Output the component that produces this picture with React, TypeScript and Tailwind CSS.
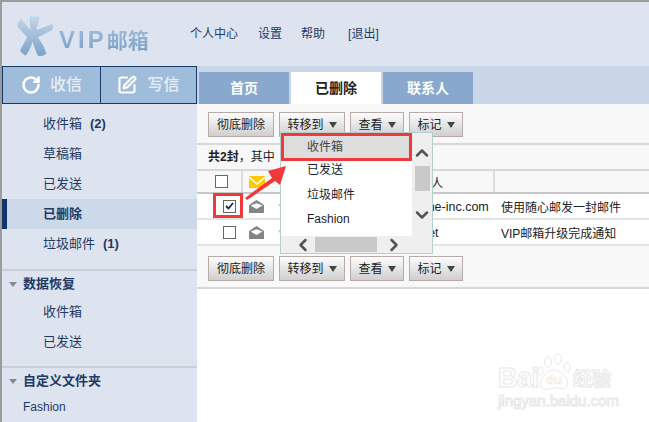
import React from "react";
import { RotateCw, SquarePen, ChevronUp, ChevronDown, ChevronLeft, ChevronRight } from "lucide-react";

const FONT = "font-['Liberation_Sans','Noto_Sans_CJK_SC',sans-serif]";

function Logo() {
  return (
    <svg width="37" height="42" viewBox="20 15 110 127" className="shrink-0">
      <defs>
        <linearGradient id="logoFill" x1="0" y1="0" x2="0" y2="1">
          <stop offset="0" stopColor="#c6d7e9" />
          <stop offset="1" stopColor="#7ba2c9" />
        </linearGradient>
      </defs>
      <path
        fill="url(#logoFill)"
        d="M58 18 L88 20 L78 60 L125 42 Q130 50 126 60 L82 82 Q100 105 108 132 Q95 142 82 138 Q72 115 66 95 Q60 120 45 138 Q33 132 28 122 Q40 100 50 82 Q32 65 20 50 Q20 35 32 27 Q48 45 60 62 Q56 40 58 18 Z"
      />
    </svg>
  );
}

function ToolButton({ label, caret = true, width }: { label: string; caret?: boolean; width: string }) {
  return (
    <div className={`${width} h-[25px] flex items-center justify-center gap-[5px] border border-[#b9aaaa] bg-gradient-to-b from-[#fdfdfd] to-[#cfcfcf] text-[12px] text-[#222]`}>
      <span>{label}</span>
      {caret && <span className="w-0 h-0 border-l-[4px] border-r-[4px] border-t-[6px] border-l-transparent border-r-transparent border-t-[#444]" />}
    </div>
  );
}

function Toolbar() {
  return (
    <div className="flex gap-[5px] pl-[11px]">
      <ToolButton label="彻底删除" caret={false} width="w-[66px]" />
      <ToolButton label="转移到" width="w-[66px]" />
      <ToolButton label="查看" width="w-[54px]" />
      <ToolButton label="标记" width="w-[54px]" />
    </div>
  );
}

function OpenMail() {
  return (
    <svg width="15" height="13" viewBox="0 0 15 13">
      <path d="M0 5 L7.5 0 L15 5 V13 H0 Z" fill="#858585" />
      <path d="M1.5 5.5 L7.5 9 L13.5 5.5 L7.5 3.2 Z" fill="#fff" />
    </svg>
  );
}

function SideItem({ label, count, active }: { label: string; count?: string; active?: boolean }) {
  return (
    <div className={`h-[30px] flex items-center pl-[41px] text-[13px] text-[#1f3a66] ${active ? "bg-[#ccd9e9] border-l-[5px] border-[#12366b] !pl-[36px] font-bold" : ""}`}>
      <span>{label}</span>
      {count && <span className="ml-[8px] font-bold">{count}</span>}
    </div>
  );
}

function SideTitle({ label }: { label: string }) {
  return (
    <div className="h-[26px] flex items-center pl-[7px] gap-[6px] text-[13px] font-bold text-[#1f3a66]">
      <span className="w-0 h-0 border-l-[4px] border-r-[4px] border-t-[5px] border-l-transparent border-r-transparent border-t-[#888]" />
      <span>{label}</span>
    </div>
  );
}

function MailRow({ checked, sender, subject }: { checked?: boolean; sender: string; subject: string }) {
  return (
    <div className="h-[26px] flex items-center border-b-2 border-[#e4e4e4] bg-white text-[12px] text-[#222]">
      <div className="w-[46px] flex justify-end pr-[7px]">
        <div className="w-[13px] h-[13px] border border-[#666] bg-white flex items-center justify-center">
          {checked && (
            <svg width="9" height="8" viewBox="0 0 9 8">
              <path d="M1 4 L3.5 6.5 L8 1" fill="none" stroke="#0f2a55" strokeWidth="1.8" />
            </svg>
          )}
        </div>
      </div>
      <div className="w-[165px] pl-[6px] flex items-center gap-[14px]">
        <OpenMail />
        <span className="w-0 h-0 border-l-[3px] border-r-[3px] border-t-[5px] border-l-transparent border-r-transparent border-t-[#ccc]" />
      </div>
      <div className="w-[93px] pt-[3px] text-[12.5px]">{sender}</div>
      <div className="pt-[3px]">{subject}</div>
    </div>
  );
}

function MoveMenu() {
  return (
    <div className="absolute left-[278px] top-[130px] w-[153px] h-[122px] border border-[#b5cfcf] bg-[#efefef] flex flex-col text-[12px] text-[#1c1c2e]">
      <div className="flex flex-1 min-h-0">
        <div className="w-[135px] bg-white">
          <div className="h-[28px] bg-[#ddd] border-[3px] border-[#f03a3a] flex items-center pl-[23px] text-[#444] relative z-10">收件箱</div>
          <div className="-mt-[3px]">
            {["已发送", "垃圾邮件", "Fashion"].map((f) => (
              <div key={f} className="h-[24.5px] flex items-center pl-[26px]">{f}</div>
            ))}
          </div>
        </div>
        <div className="flex-1 flex flex-col items-center pt-[10px] text-[#555]">
          <ChevronUp size={20} strokeWidth={3} />
          <div className="w-[15px] h-[25px] bg-[#c9c9c9] mt-[3px] shrink-0" />
          <ChevronDown size={20} strokeWidth={3} className="mt-[14px]" />
        </div>
      </div>
      <div className="h-[17px] flex items-center text-[#555]">
        <ChevronLeft size={20} strokeWidth={3} className="ml-[12px]" />
        <div className="w-[62px] h-[15px] bg-[#c9c9c9] ml-[2px]" />
        <ChevronRight size={20} strokeWidth={3} className="ml-[7px]" />
      </div>
    </div>
  );
}

function Watermark() {
  const outline = "text-transparent [-webkit-text-stroke:1px_#e8e8e8]";
  return (
    <div className={`absolute left-[496px] top-[351px] w-[120px] ${outline}`}>
      <div className="flex items-end h-[38px]">
        <span className="text-[27px] leading-[26px] font-bold w-[39px] shrink-0 tracking-[-0.5px]">Bai</span>
        <svg width="36" height="38" viewBox="0 0 34 38" className="shrink-0">
          <g fill="none" stroke="#e8e8e8">
            <ellipse cx="10" cy="9" rx="3.5" ry="5" />
            <ellipse cx="20" cy="6" rx="3.5" ry="5" />
            <ellipse cx="2.5" cy="18" rx="2.5" ry="4" />
            <ellipse cx="29" cy="14" rx="3" ry="4.5" />
            <path d="M16 17 C24 17 32 27 29 33 C26 38 20 34 16 35 C11 36 5 38 3 33 C1 27 9 17 16 17 Z" />
          </g>
          <text x="8" y="31" fontSize="13" fontWeight="700" fill="none" stroke="#e8e8e8" strokeWidth="0.7">du</text>
        </svg>
        <span className="text-[19px] leading-[23px] font-bold whitespace-nowrap">经验</span>
      </div>
      <div className="text-[15px] leading-[16px] mt-[2px] whitespace-nowrap">jingyan.baidu.com</div>
    </div>
  );
}

export default function App() {
  return (
    <div className={`${FONT} relative w-[649px] h-[422px] overflow-hidden bg-[#dde4ef] border-t-2 border-l-2 border-[#9c9c9c]`}>
      {/* top bar */}
      <div className="h-[64px] flex items-center text-[12px] text-[#1f3a66]">
        <div className="w-[188px] flex items-center pl-[15px] pt-[4px] gap-[5px]">
          <Logo />
          <span className="font-bold whitespace-nowrap bg-gradient-to-b from-[#b9cee3] to-[#7098c0] bg-clip-text text-transparent pt-[8px]">
            <span className="text-[24px] tracking-[3px]">VIP</span>
            <span className="text-[21px]">邮箱</span>
          </span>
        </div>
        <div className="flex items-center">
          <span>个人中心</span>
          <span className="ml-[20px]">设置</span>
          <span className="ml-[19px]">帮助</span>
          <span className="ml-[23px]">[退出]</span>
        </div>
      </div>

      <div className="flex h-[356px]">
        {/* sidebar */}
        <div className="w-[195px] shrink-0">
          <div className="h-[38px] flex border border-[#143a6b] bg-[#9fbcdb] text-[#e8eff7] text-[16px]">
            <div className="w-[98px] flex items-center justify-center gap-[9px] border-r border-[#143a6b] font-medium">
              <RotateCw size={20} strokeWidth={3} className="text-white" />
              <span>收信</span>
            </div>
            <div className="flex-1 flex items-center justify-center gap-[10px] font-medium">
              <SquarePen size={20} strokeWidth={2.5} className="text-white" />
              <span>写信</span>
            </div>
          </div>
          <div className="pt-[5px] pb-[10px] border-b-2 border-[#ccd0d6]">
            <SideItem label="收件箱" count="(2)" />
            <SideItem label="草稿箱" />
            <SideItem label="已发送" />
            <SideItem label="已删除" active />
            <SideItem label="垃圾邮件" count="(1)" />
          </div>
          <div className="pb-[9px] border-b-2 border-[#ccd0d6]">
            <SideTitle label="数据恢复" />
            <SideItem label="收件箱" />
            <SideItem label="已发送" />
          </div>
          <SideTitle label="自定义文件夹" />
          <div className="h-[26px] flex items-center pl-[21px] text-[12px] text-[#1f3a66]">Fashion</div>
        </div>

        {/* main */}
        <div className="flex-1 bg-white min-w-0">
          <div className="h-[38px] bg-[#c9d6e8] pt-[6px] pl-[2px] flex gap-[2px] text-[14px] font-bold">
            <div className="w-[90px] flex items-center justify-center bg-[#88a9cd] text-white">首页</div>
            <div className="w-[90px] flex items-center justify-center bg-white text-[#222]">已删除</div>
            <div className="w-[90px] flex items-center justify-center bg-[#88a9cd] text-white">联系人</div>
          </div>
          <div className="h-[41px] pt-[8px] bg-[#f8f8f8] border-b-2 border-[#d8d8d8]">
            <Toolbar />
          </div>
          <div className="h-[26px] pl-[11px] flex items-center bg-[#f8f8f8] text-[12px] text-[#222] border-b-2 border-[#d8d8d8]">
            <span className="font-bold">共2封</span>
            <span>，其中</span>
          </div>
          <div className="h-[23px] flex items-center border-b-2 border-[#c8c8c8] bg-[#f8f8f8] text-[12px] text-[#222]">
            <div className="w-[46px] h-full flex items-center justify-end pr-[13px] border-r-2 border-[#dcdcdc]">
              <div className="w-[13px] h-[13px] border border-[#666] bg-white" />
            </div>
            <div className="pl-[6px] w-[252px] h-full flex items-center border-r-2 border-[#dcdcdc]">
              <svg width="16" height="12" viewBox="0 0 16 12">
                <rect width="16" height="12" fill="#ffc800" />
                <path d="M0 1 L8 8 L16 1" fill="none" stroke="#fff" strokeWidth="1.5" />
              </svg>
              <span className="ml-auto mr-[50px] pt-[5px]">人</span>
            </div>
          </div>
          <MailRow checked sender="@one-inc.com" subject="使用随心邮发一封邮件" />
          <MailRow sender="ip.net" subject="VIP邮箱升级完成通知" />
          <div className="h-[43px] pt-[10px] bg-[#f8f8f8] border-b-2 border-[#d8d8d8]">
            <Toolbar />
          </div>
        </div>
      </div>

      <MoveMenu />

      {/* red marks */}
      <div className="absolute left-[211px] top-[191px] w-[30px] h-[25px] border-[3px] border-[#f03a3a]" />
      <svg width="50" height="40" viewBox="0 0 50 40" className="absolute left-[241px] top-[162px]">
        <path d="M2 34 L29 14 L25 7 L43 2 L37 21 L32 17 L4 36 Z" fill="#f03a3a" />
      </svg>

      <Watermark />
    </div>
  );
}
